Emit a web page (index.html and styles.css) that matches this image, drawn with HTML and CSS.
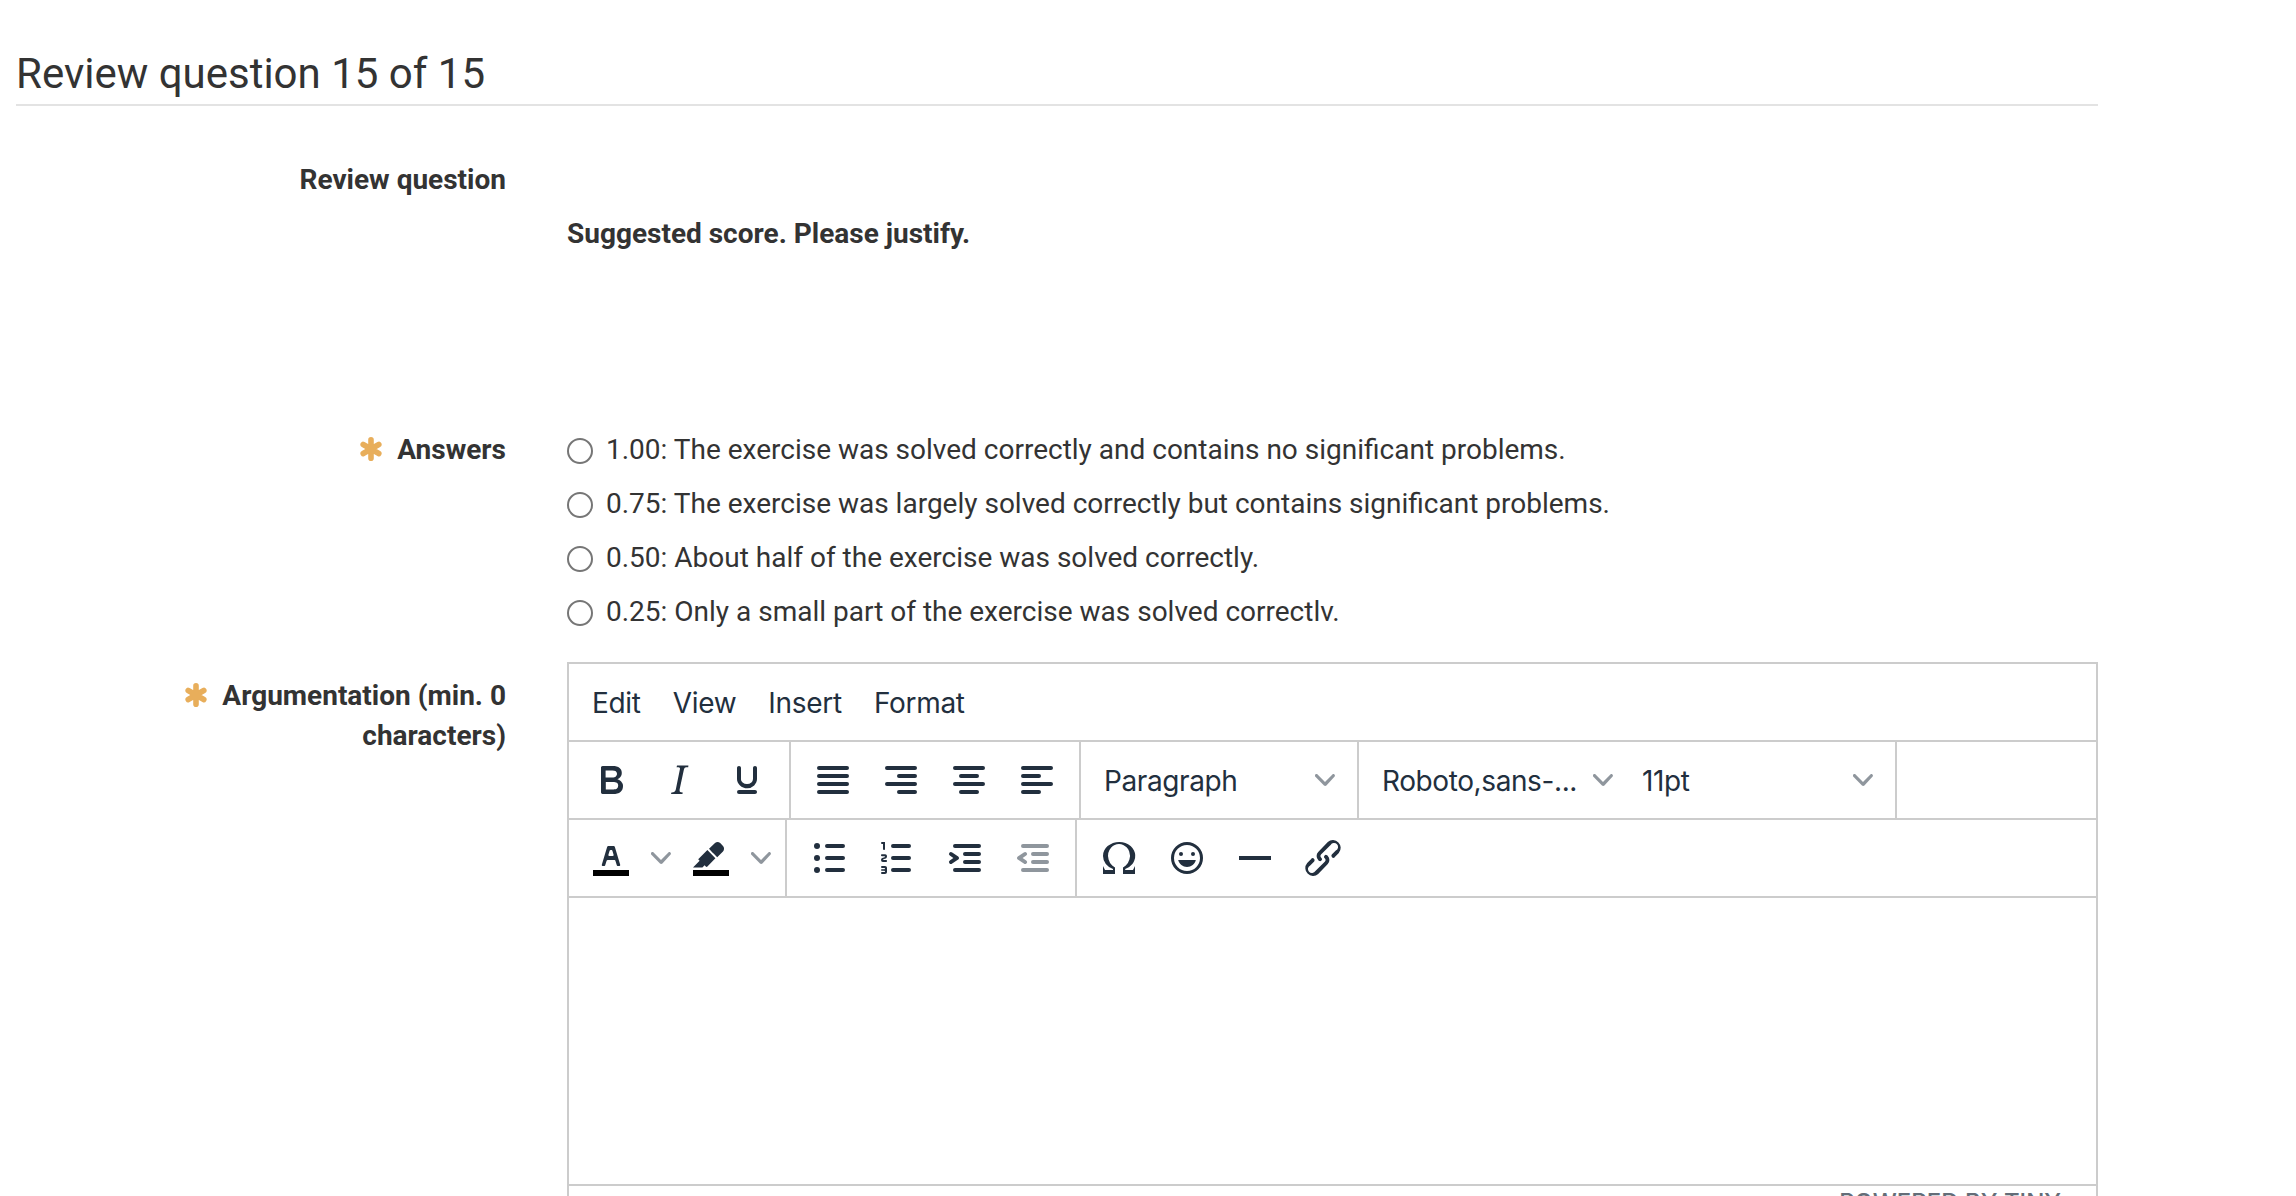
FILE: index.html
```html
<!DOCTYPE html>
<html lang="en">
<head>
<meta charset="utf-8">
<title>Review question 15 of 15</title>
<link rel="stylesheet" href="styles.css">
</head>
<body>
<svg class="defs" aria-hidden="true">
  <symbol id="star" viewBox="0 0 22 24"><path d="M11 2.800v18.400M3.200 7.500l15.600 9M18.800 7.500l-15.600 9" fill="none" stroke="currentColor" stroke-width="5.600" stroke-linecap="round"/></symbol>
  <symbol id="chev" viewBox="0 0 10 10"><path d="M8.700 2.200c.3-.3.8-.3 1 0 .4.4.4.9 0 1.200L5.700 7.800c-.3.3-.9.3-1.200 0L.2 3.400a.8.8 0 0 1 0-1.200c.3-.3.8-.3 1.100 0L5 6l3.700-3.800Z"/></symbol>
</svg>
<main class="page">
  <h1 class="title">Review question 15 of 15</h1>
  <form class="form">
    <div class="label label-question">Review question</div>
    <div class="question">Suggested score. Please justify.</div>

    <div class="label label-answers"><svg class="star"><use href="#star"/></svg>Answers</div>
    <div class="answers">
      <label class="answer"><input type="radio" name="a" class="radio"><span>1.00: The exercise was solved correctly and contains no significant problems.</span></label>
      <label class="answer"><input type="radio" name="a" class="radio"><span>0.75: The exercise was largely solved correctly but contains significant problems.</span></label>
      <label class="answer"><input type="radio" name="a" class="radio"><span>0.50: About half of the exercise was solved correctly.</span></label>
      <label class="answer"><input type="radio" name="a" class="radio"><span>0.25: Only a small part of the exercise was solved correctlv.</span></label>
    </div>

    <div class="label label-arg"><svg class="star"><use href="#star"/></svg>Argumentation (min. 0 characters)</div>
    <div class="editor">
      <div class="bar menubar"><span>Edit</span><span>View</span><span>Insert</span><span>Format</span></div>
      <div class="bar">
        <div class="group">
          <span class="btn"><svg class="icon" viewBox="0 0 24 24"><path fill-rule="evenodd" d="M7.8 19c-.3 0-.5 0-.6-.2l-.2-.5V5.700c0-.2 0-.4.2-.5l.6-.2h5c1.500 0 2.700.3 3.500 1 .7.6 1.100 1.400 1.100 2.500a3 3 0 0 1-.6 1.900c-.4.6-1 1-1.600 1.200.4.1.9.3 1.300.6s.8.7 1 1.200c.4.4.5 1 .5 1.600 0 1.300-.4 2.300-1.300 3-.8.7-2.100 1-3.800 1H7.800Zm5-8.300c.6 0 1.200-.1 1.600-.5.4-.3.6-.7.6-1.300 0-1.100-.8-1.700-2.300-1.700H9.300v3.500h3.400Zm.5 6c.7 0 1.300-.1 1.700-.4.4-.4.6-.9.6-1.500s-.2-1-.7-1.400c-.4-.3-1-.4-2-.4H9.400v3.800h4Z"/></svg></span>
          <span class="btn"><svg class="icon" viewBox="0 0 24 24"><path d="m16.700 4.700-.1.900h-.3c-.6 0-1 0-1.400.3-.3.3-.4.6-.5 1.100l-2.100 9.800v.6c0 .5.4.8 1.400.8h.2l-.2.800H8l.2-.8h.2c1.100 0 1.800-.5 2-1.500l2-9.800.1-.5c0-.6-.4-.8-1.400-.8h-.3l.2-.9h5.800Z"/></svg></span>
          <span class="btn"><svg class="icon" viewBox="0 0 24 24"><path d="M16 5c.6 0 1 .4 1 1v5.500a4 4 0 0 1-.4 1.800l-1 1.400a5.300 5.300 0 0 1-5.500 1 5 5 0 0 1-1.600-1c-.5-.4-.8-.9-1.100-1.400a4 4 0 0 1-.4-1.800V6c0-.6.4-1 1-1s1 .4 1 1v5.500c0 .3 0 .6.2 1l.6.7a3.300 3.300 0 0 0 2.200.8 3.400 3.400 0 0 0 2.200-.8c.3-.2.4-.5.6-.8l.2-.9V6c0-.6.4-1 1-1ZM8 17h8c.6 0 1 .4 1 1s-.4 1-1 1H8a1 1 0 0 1 0-2Z"/></svg></span>
        </div>
        <div class="group">
          <span class="btn"><svg class="icon lines" viewBox="0 0 24 24"><path d="M5 6h14M5 10h14M5 14h14M5 18h14"/></svg></span>
          <span class="btn"><svg class="icon lines" viewBox="0 0 24 24"><path d="M5 6h14M11 10h8M5 14h14M11 18h8"/></svg></span>
          <span class="btn"><svg class="icon lines" viewBox="0 0 24 24"><path d="M5 6h14M8 10h8M5 14h14M8 18h8"/></svg></span>
          <span class="btn"><svg class="icon lines" viewBox="0 0 24 24"><path d="M5 6h14M5 10h8M5 14h14M5 18h8"/></svg></span>
        </div>
        <div class="group">
          <span class="select"><span>Paragraph</span><svg class="chev"><use href="#chev"/></svg></span>
        </div>
        <div class="group">
          <span class="select"><span>Roboto,sans-...</span><svg class="chev"><use href="#chev"/></svg></span>
          <span class="select"><span>11pt</span><svg class="chev"><use href="#chev"/></svg></span>
        </div>
      </div>
      <div class="bar">
        <div class="group">
          <span class="btn"><svg class="icon" viewBox="0 0 24 24"><path d="M3 18h18v3H3z" fill="#000"/><path fill-rule="evenodd" d="M8.700 16h-.8a.5.5 0 0 1-.5-.6l2.700-9c.1-.3.3-.4.5-.4h2.800c.2 0 .4.1.5.4l2.700 9a.5.5 0 0 1-.5.6h-.8a.5.5 0 0 1-.4-.4l-.7-2.200c0-.3-.3-.4-.5-.4h-3.400c-.2 0-.4.1-.5.4l-.7 2.200c0 .3-.2.4-.4.4Zm2.600-7.600-.6 2a.5.5 0 0 0 .5.6h1.600a.5.5 0 0 0 .5-.6l-.6-2c0-.3-.3-.4-.5-.4h-.4c-.2 0-.4.1-.5.4Z"/></svg></span>
          <span class="drop"><svg class="chev"><use href="#chev"/></svg></span>
          <span class="btn"><svg class="icon" viewBox="0 0 24 24"><path d="M3 18h18v3H3z" fill="#000"/><path d="M7.700 16.700H3l3.300-3.300-.7-.8L10.200 8l4 4.100-4 4.200c-.2.2-.6.2-.8 0l-.6-.7-1.100 1.100Zm5-7.500L11 7.400l3-2.900a2 2 0 0 1 2.600 0L18 6c.7.7.7 2 0 2.700l-2.900 2.900-1.800-1.800-.6-.6Z"/></svg></span>
          <span class="drop"><svg class="chev"><use href="#chev"/></svg></span>
        </div>
        <div class="group">
          <span class="btn"><svg class="icon" viewBox="0 0 24 24"><path class="stroke" d="M11 6h8M11 12h8M11 18h8"/><circle cx="6" cy="6" r="1.500"/><circle cx="6" cy="12" r="1.500"/><circle cx="6" cy="18" r="1.500"/></svg></span>
          <span class="btn"><svg class="icon" viewBox="0 0 24 24"><path class="stroke" d="M10 6h8M10 12h8M10 18h8"/><path d="M6 4v3.500c0 .3-.2.5-.5.5a.5.5 0 0 1-.5-.5V5h-.5a.5.5 0 0 1 0-1H6Zm-1 8.800.2.200h1.300c.3 0 .5.2.5.5s-.2.5-.5.5H4.900a1 1 0 0 1-.9-1V13c0-.4.3-.8.6-1l1.200-.4.2-.3a.2.2 0 0 0-.2-.2H4.500a.5.5 0 0 1-.5-.5c0-.3.2-.5.5-.5h1.600c.5 0 .9.4.9 1v.1c0 .4-.3.8-.6 1l-1.200.4-.2.3ZM7 17v2c0 .6-.4 1-1 1H4.500a.5.5 0 0 1 0-1h1.200c.2 0 .3-.1.3-.3 0-.2-.1-.3-.3-.3H4.400a.4.4 0 1 1 0-.8h1.300c.2 0 .3-.1.3-.3 0-.2-.1-.3-.3-.3H4.500a.5.5 0 1 1 0-1H6c.6 0 1 .4 1 1Z"/></svg></span>
          <span class="btn"><svg class="icon" viewBox="0 0 24 24"><path class="stroke" d="M7 6h12M12 10h7M12 14h7M7 18h12"/><path d="M4.400 13.200 6.200 12l-1.800-1.200a1 1 0 0 1 1.200-1.600l3 2a1 1 0 0 1 0 1.600l-3 2a1 1 0 1 1-1.200-1.600Z"/></svg></span>
          <span class="btn disabled"><svg class="icon" viewBox="0 0 24 24"><path class="stroke" d="M7 6h12M12 10h7M12 14h7M7 18h12"/><path d="M8.600 13.200a1 1 0 0 1-1.200 1.600l-3-2a1 1 0 0 1 0-1.600l3-2a1 1 0 0 1 1.200 1.600L6.800 12l1.800 1.200Z"/></svg></span>
        </div>
        <div class="group last">
          <span class="btn"><svg class="icon" viewBox="0 0 24 24"><path d="M15 18h4l1-2v4h-6v-3.300l1.400-1a6 6 0 0 0 1.800-2.900 6.300 6.300 0 0 0-.1-4.100 5.800 5.800 0 0 0-3-3.200c-.6-.3-1.300-.5-2.100-.5a5.100 5.100 0 0 0-3.900 1.800 6.300 6.300 0 0 0-1.300 6 6.200 6.200 0 0 0 1.800 3l1.400.9V20H4v-4l1 2h4v-.5l-2-1L5.400 15A6.500 6.500 0 0 1 4 11c0-1 .2-1.900.6-2.700A7 7 0 0 1 6.300 6C7.100 5.400 8 5 9 4.500c1-.3 2-.5 3.100-.5a8.800 8.800 0 0 1 5.700 2 7 7 0 0 1 1.700 2.300 6 6 0 0 1 .2 4.800c-.2.7-.6 1.300-1 1.900a7.600 7.600 0 0 1-3.600 2.500v.5Z"/></svg></span>
          <span class="btn"><svg class="icon" viewBox="0 0 24 24"><circle cx="9" cy="10" r="1"/><circle cx="15" cy="10" r="1"/><path d="M12 16.500c2.100 0 4-1.500 4.400-3.500H7.600c.5 2 2.300 3.500 4.400 3.500Z"/><circle cx="12" cy="12" r="7.250" fill="none" stroke="currentColor" stroke-width="1.500"/></svg></span>
          <span class="btn"><svg class="icon" viewBox="0 0 24 24"><path d="M4 11h16v2H4z"/></svg></span>
          <span class="btn"><svg class="icon" viewBox="0 0 24 24"><path d="M6.200 12.300a1 1 0 0 1 1.400 1.400l-2 2a2 2 0 1 0 2.600 2.800l4.800-4.800a1 1 0 0 0 0-1.400 1 1 0 1 1 1.400-1.300 2.900 2.900 0 0 1 0 4L9.600 20a3.900 3.900 0 0 1-5.500-5.500l2-2Zm11.600-.6a1 1 0 0 1-1.400-1.400l2-2a2 2 0 1 0-2.600-2.800L11 10.300a1 1 0 0 0 0 1.400A1 1 0 1 1 9.600 13a2.900 2.900 0 0 1 0-4L14.400 4a3.900 3.900 0 0 1 5.500 5.500l-2 2Z"/></svg></span>
        </div>
      </div>
      <div class="content"></div>
      <div class="status"><span>POWERED BY TINY</span></div>
    </div>
  </form>
</main>
</body>
</html>
```
FILE: styles.css
```css
* { box-sizing: border-box; }
html, body { height: 100%; }
body {
  margin: 0;
  overflow: hidden;
  background: #fff;
  color: #333;
  font: 28px/40px Roboto, sans-serif;
}
.defs { display: none; }
.page { width: 2098px; padding: 46px 0 0 16px; }
.title {
  margin: 0;
  height: 60px;
  border-bottom: 2px solid #e3e3e3;
  font-size: 42px;
  line-height: 56px;
  font-weight: 400;
}
.form {
  display: grid;
  grid-template-columns: 490px 1531px;
  column-gap: 61px;
  grid-template-rows: 324px 232px 540px;
}
.label { text-align: right; font-weight: 700; }
.label-question { padding-top: 54px; }
.question { padding-top: 108px; font-weight: 700; white-space: nowrap; }
.star { width: 22px; height: 24px; color: #e8ae5b; margin-right: 15px; vertical-align: -2px; }
.answer { display: flex; height: 54px; white-space: nowrap; }
.radio {
  appearance: none;
  width: 26px;
  height: 26px;
  margin: 8px 13px 0 0;
  border: 2px solid #767676;
  border-radius: 50%;
}
.label-arg { padding: 14px 0 0 120px; }
.editor {
  height: 560px;
  border: 2px solid #ccc;
  color: #222f3e;
  font-family: Inter, sans-serif;
  white-space: nowrap;
}
.bar { display: flex; height: 78px; border-bottom: 2px solid #ccc; }
.menubar { padding: 19px 0 0 23px; gap: 32px; letter-spacing: -.3px; }
.group { display: flex; align-items: center; padding: 0 8px; border-right: 2px solid #ccc; }
.group.last { border-right: 0; }
.btn, .drop { display: flex; align-items: center; justify-content: center; width: 68px; height: 68px; }
.drop { width: 32px; }
.icon { width: 48px; height: 48px; fill: currentColor; }
.stroke, .lines path { fill: none; stroke: currentColor; stroke-width: 2; stroke-linecap: round; }
.disabled { opacity: .5; }
.select {
  display: flex;
  align-items: center;
  justify-content: space-between;
  width: 260px;
  padding: 2px 14px 0 15px;
  letter-spacing: -.4px;
}
.chev { width: 20px; height: 20px; opacity: .5; fill: currentColor; }
.select .chev { margin-top: -3px; }
.content { height: 288px; border-bottom: 2px solid #ccc; }
.status {
  display: flex;
  justify-content: flex-end;
  padding: 2px 35px 0 0;
  color: #646d78;
  font-size: 24px;
  line-height: 29px;
  font-weight: 500;
}
```
